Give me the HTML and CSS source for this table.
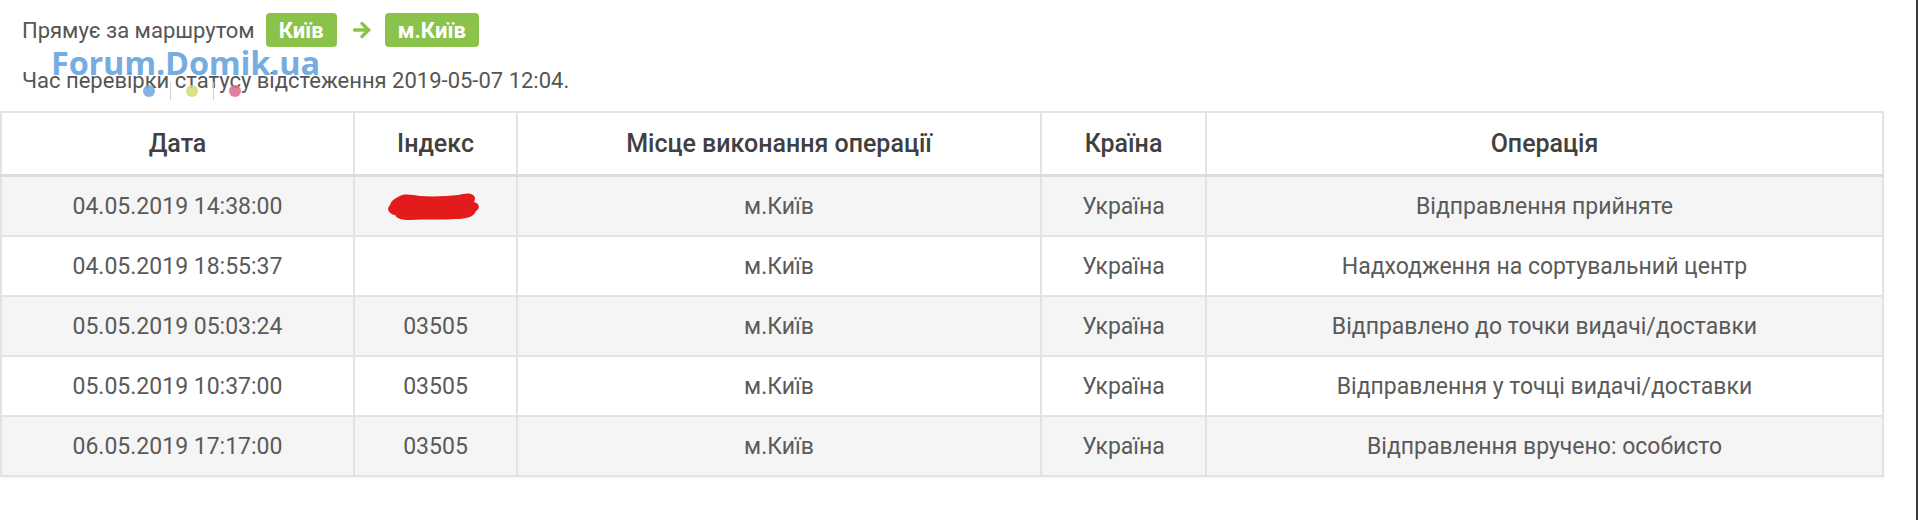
FILE: index.html
```html
<!DOCTYPE html>
<html lang="uk">
<head>
<meta charset="utf-8">
<title>Відстеження</title>
<link rel="stylesheet" href="styles.css">
</head>
<body>
<div class="page">
  <div class="info">
    <div class="route">
      <span class="route-label">Прямує за маршрутом</span>
      <span class="badge">Київ</span>
      <span class="arrow">
        <svg width="20" height="18" viewBox="0 0 20 18"><path d="M2.5 9 H17 M10 2.5 L16.5 9 L10 15.5" fill="none" stroke="#8bc34a" stroke-width="3.4" stroke-linecap="round" stroke-linejoin="round"/></svg>
      </span>
      <span class="badge">м.Київ</span>
    </div>
    <div class="checked">Час перевірки статусу відстеження 2019-05-07 12:04.</div>
    <div class="watermark">
      <span class="wm-text">Forum.Domik.ua</span>
      <span class="wm-dots">
        <i class="dot dot-blue"></i><i class="sep"></i><i class="dot dot-lime"></i><i class="sep"></i><i class="dot dot-pink"></i>
      </span>
    </div>
  </div>
  <table class="track">
    <colgroup>
      <col class="c-date"><col class="c-index"><col class="c-place"><col class="c-country"><col class="c-op">
    </colgroup>
    <thead>
      <tr><th>Дата</th><th>Індекс</th><th>Місце виконання операції</th><th>Країна</th><th>Операція</th></tr>
    </thead>
    <tbody>
      <tr class="odd"><td>04.05.2019 14:38:00</td><td><span class="redact"><svg width="94" height="30" viewBox="0 0 94 30"><path d="M12 6 C18 2 26 4 34 5 C48 6 62 5 72 4 C78 3 82 1 87 4 C90 6 89 9 88 11 C93 12 95 17 90 20 C88 26 80 28 70 28 C56 29 40 28 24 29 C16 29 11 28 9 24 C3 23 0 18 4 14 C5 10 8 8 12 6 Z" fill="#e31b1b"/></svg></span></td><td>м.Київ</td><td>Україна</td><td>Відправлення прийняте</td></tr>
      <tr><td>04.05.2019 18:55:37</td><td></td><td>м.Київ</td><td>Україна</td><td>Надходження на сортувальний центр</td></tr>
      <tr class="odd"><td>05.05.2019 05:03:24</td><td>03505</td><td>м.Київ</td><td>Україна</td><td>Відправлено до точки видачі/доставки</td></tr>
      <tr><td>05.05.2019 10:37:00</td><td>03505</td><td>м.Київ</td><td>Україна</td><td>Відправлення у точці видачі/доставки</td></tr>
      <tr class="odd"><td>06.05.2019 17:17:00</td><td>03505</td><td>м.Київ</td><td>Україна</td><td>Відправлення вручено: особисто</td></tr>
    </tbody>
  </table>
</div>
</body>
</html>
```
FILE: styles.css
```css
html, body {
  margin: 0;
  padding: 0;
  background: #ffffff;
}
body {
  font-family: Roboto, "Liberation Sans", sans-serif;
  color: #555555;
  width: 1918px;
  height: 520px;
  overflow: hidden;
  box-sizing: border-box;
  border-right: 2px solid #3a3a3a;
}
.page {
  width: 1916px;
}
.info {
  position: relative;
  padding: 13px 0 0 22px;
  height: 111px;
  box-sizing: border-box;
}
.route {
  display: flex;
  align-items: center;
  height: 34px;
  font-size: 22px;
}
.route-label {
  margin-right: 11px;
}
.badge {
  display: inline-flex;
  align-items: center;
  justify-content: center;
  height: 34px;
  padding: 0 13px;
  background: #8bc34a;
  color: #ffffff;
  font-weight: 700;
  font-size: 22px;
  border-radius: 4px;
}
.arrow {
  display: inline-flex;
  align-items: center;
  margin: 0 13px 0 15px;
}
.checked {
  margin-top: 21px;
  font-size: 22px;
  line-height: 26px;
}
.watermark {
  position: absolute;
  left: 51px;
  top: 46px;
  display: flex;
  flex-direction: column;
  align-items: flex-start;
  opacity: 0.85;
  pointer-events: none;
}
.wm-text {
  font-family: "Open Sans", "Liberation Sans", sans-serif;
  font-weight: 700;
  font-size: 32.5px;
  line-height: 34px;
  color: #5f9fdc;
  letter-spacing: -0.2px;
}
.wm-dots {
  display: flex;
  align-items: center;
  gap: 15px;
  margin-left: 92px;
  margin-top: 2px;
}
.dot {
  display: block;
  width: 12px;
  height: 12px;
  border-radius: 50%;
}
.dot-blue { background: #6fa7dc; }
.dot-lime { background: #d3dd70; }
.dot-pink { background: #de6c8d; }
.sep {
  display: block;
  width: 1px;
  height: 18px;
  background: #c8c8c8;
}
.track {
  border-collapse: collapse;
  width: 1882px;
  table-layout: fixed;
  font-size: 23px;
  box-shadow: 0 1px 2px rgba(0,0,0,0.06);
}
.c-date { width: 353px; }
.c-index { width: 163px; }
.c-place { width: 524px; }
.c-country { width: 165px; }
.c-op { width: 677px; }
.track th, .track td {
  border: 2px solid #e3e3e3;
  text-align: center;
  vertical-align: middle;
  padding: 0 8px;
}
.track th {
  height: 61px;
  font-weight: 500;
  font-size: 25px;
  color: #404040;
  background: #ffffff;
  border-bottom: 3px solid #dcdcdc;
}
.track td {
  height: 58px;
  color: #5a5a5a;
  background: #ffffff;
}
.track tr.odd td {
  background: #f5f5f5;
}
.redact {
  display: inline-flex;
  vertical-align: middle;
  margin-left: -6px;
}
```
